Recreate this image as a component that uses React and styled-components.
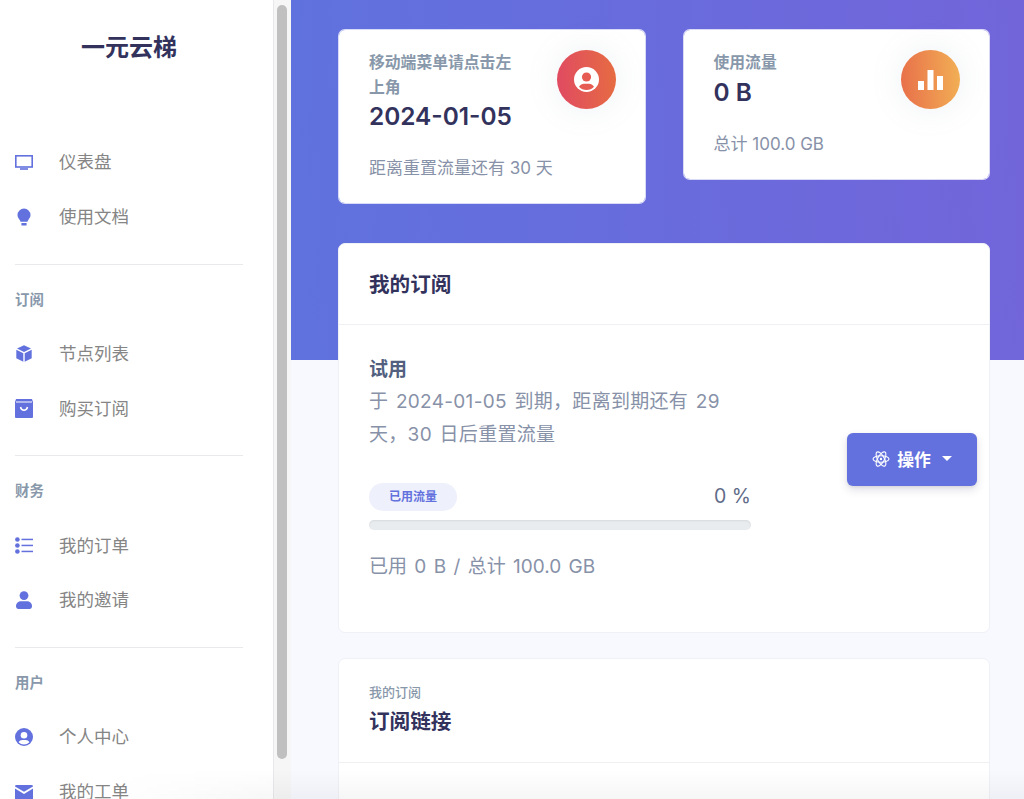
import React from 'react';
import styled, { createGlobalStyle } from 'styled-components';

const GlobalStyle = createGlobalStyle`
  html, body {
    margin: 0;
    height: 100%;
    overflow: hidden;
    background: #f8f9fe;
  }
  * {
    box-sizing: border-box;
  }
  body {
    font-family: Inter, "Noto Sans CJK SC", sans-serif;
  }
`;

const Page = styled.div`
  position: relative;
  display: flex;
  width: 1024px;
  height: 799px;
  overflow: hidden;
`;

const Sidebar = styled.aside`
  width: 273px;
  flex-shrink: 0;
  padding: 0 30px 0 15px;
  background: #fff;
  overflow: hidden;
`;

const Brand = styled.div`
  height: 135px;
  padding-top: 30px;
  text-align: center;
  font-size: 24px;
  line-height: 36px;
  font-weight: 700;
  color: #32325d;
`;

const MenuItem = styled.div`
  display: flex;
  align-items: center;
  height: 54.6px;
  font-size: 17.5px;
  color: #858585;
`;

const MenuIcon = styled.span`
  display: flex;
  justify-content: center;
  width: 18px;
  margin-right: 26px;
  color: #6271dd;

  svg {
    display: block;
  }
`;

const MenuLabel = styled.span`
  margin-top: -3px;
`;

const Divider = styled.hr`
  height: 1px;
  margin: 19.5px 0 0;
  border: 0;
  background: #e9e9ec;
`;

const SectionLabel = styled.div`
  height: 62px;
  padding-top: 24px;
  font-size: 14.4px;
  line-height: 22px;
  font-weight: 600;
  color: #8898aa;
`;

const ScrollTrack = styled.div`
  width: 18px;
  flex-shrink: 0;
  padding: 5px 3px 0 3px;
  background: #f6f6f7;
  border-left: 1px solid #e8e8ea;
`;

const ScrollThumb = styled.div`
  width: 10px;
  height: 754px;
  border-radius: 5px;
  background: #c0c0c0;
`;

const Main = styled.main`
  flex: 1;
  padding: 29px 34px 0 47px;
  background:
    linear-gradient(87deg, #5f72de, #7265da) top left / 100% 360px no-repeat,
    #f8f9fe;
`;

const StatRow = styled.div`
  display: grid;
  grid-template-columns: 1fr 1fr;
  gap: 37px;
  align-items: start;
  margin-bottom: 39px;
`;

const StatCard = styled.section`
  display: flex;
  justify-content: space-between;
  padding: 20px 29px 22px 30px;
  border: 1px solid rgba(255, 255, 255, 0.75);
  border-radius: 7px;
  background: #fff;
  background-clip: padding-box;
`;

const StatText = styled.div`
  width: 150px;
  padding-top: 1px;
`;

const StatTitle = styled.div`
  font-size: 15.8px;
  line-height: 24.5px;
  font-weight: 600;
  color: #8898aa;
`;

const StatValue = styled.div`
  font-size: 24.4px;
  line-height: 33px;
  font-weight: 600;
  color: #32325d;
  white-space: nowrap;
`;

const StatNote = styled.div`
  margin-top: 22px;
  font-size: 17px;
  line-height: 26px;
  color: #8791a8;
  white-space: nowrap;
`;

const StatIcon = styled.div`
  display: flex;
  align-items: center;
  justify-content: center;
  width: 59px;
  height: 59px;
  flex-shrink: 0;
  border-radius: 50%;
  background: linear-gradient(87deg, ${(p) => p.$from}, ${(p) => p.$to});
  box-shadow: 0 0 32px rgba(136, 152, 170, 0.15);
  color: #fff;
`;

const Panel = styled.section`
  margin-bottom: 25px;
  border: 1px solid #f0f1f6;
  border-radius: 7px;
  background: #fff;
`;

const PanelHeader = styled.header`
  padding: ${(p) => p.$padding};
  border-bottom: 1px solid #f0f0f4;
`;

const PanelTitle = styled.h3`
  margin: 0;
  font-size: 20.6px;
  line-height: 30px;
  font-weight: 600;
  color: #32325d;
`;

const PanelKicker = styled.div`
  margin-bottom: 6px;
  font-size: 13px;
  line-height: 18px;
  font-weight: 500;
  color: #8898aa;
`;

const PlanBody = styled.div`
  display: flex;
  justify-content: space-between;
  height: 307px;
  padding: 30px 12px 0 30px;
`;

const PlanInfo = styled.div`
  width: 382px;
`;

const PlanName = styled.div`
  font-size: 19px;
  line-height: 29px;
  font-weight: 600;
  color: #525f7f;
`;

const PlanExpiry = styled.div`
  width: 362px;
  margin: 1px 0 32px;
  font-size: 19px;
  line-height: 33px;
  letter-spacing: 0.3px;
  word-spacing: 2px;
  color: #8791a8;
`;

const UsageHead = styled.div`
  display: flex;
  align-items: flex-start;
  justify-content: space-between;
`;

const Badge = styled.span`
  width: 88px;
  height: 28px;
  border-radius: 14px;
  background: #eef0fc;
  font-size: 12px;
  line-height: 28px;
  font-weight: 600;
  text-align: center;
  color: #6271dd;
`;

const Percent = styled.span`
  font-size: 19.5px;
  line-height: 26px;
  color: #5f6b88;
`;

const ProgressTrack = styled.div`
  height: 10px;
  margin-top: 9px;
  border-radius: 5px;
  background: #e9ecef;
  box-shadow: inset 0 1px 2px rgba(0, 0, 0, 0.08);
`;

const ProgressBar = styled.div`
  height: 100%;
  border-radius: 5px;
  background: #6271dd;
`;

const UsageNote = styled.div`
  margin-top: 23px;
  font-size: 19px;
  line-height: 28px;
  word-spacing: 2px;
  color: #8791a8;
`;

const ActionButton = styled.button`
  display: flex;
  align-items: center;
  justify-content: center;
  width: 130px;
  height: 53px;
  margin-top: 78px;
  padding: 0 0 2px;
  border: 0;
  border-radius: 6px;
  background: #6271dd;
  box-shadow: 0 4px 8px rgba(50, 50, 93, 0.15), 0 1px 3px rgba(0, 0, 0, 0.08);
  font: inherit;
  font-size: 16.8px;
  font-weight: 600;
  color: #fff;

  svg {
    margin-right: 7px;
  }
`;

const Caret = styled.span`
  width: 0;
  height: 0;
  margin-left: 11px;
  border-top: 5px solid #fff;
  border-left: 5px solid transparent;
  border-right: 5px solid transparent;
`;

const EmptyBody = styled.div`
  height: 60px;
`;

const BottomFade = styled.div`
  position: absolute;
  left: 0;
  right: 0;
  bottom: 0;
  height: 30px;
  background: linear-gradient(rgba(0, 0, 0, 0), rgba(0, 0, 0, 0.035));
  mask-image: linear-gradient(to right, transparent 100px, black 290px);
  pointer-events: none;
`;

const MonitorIcon = () => (
  <svg width="18" height="17" viewBox="0 0 18 17" fill="none">
    <rect x="0.8" y="1.8" width="16.4" height="11.2" stroke="currentColor" strokeWidth="1.6" />
    <rect x="5" y="14.2" width="8" height="1.6" fill="currentColor" />
  </svg>
);

const BulbIcon = () => (
  <svg width="14" height="18" viewBox="0 0 14 18" fill="currentColor">
    <path d="M7 0.500a6.500 6.500 0 0 1 6.500 6.500c0 2.600-1.600 3.900-2.500 5.400-.3.5-.5 1-.6 1.400H3.600c-.1-.4-.3-.9-.6-1.400C2 10.900.5 9.600.5 7A6.500 6.500 0 0 1 7 .5z" />
    <rect x="4.400" y="15" width="5.200" height="2.600" rx="0.6" />
  </svg>
);

const BoxIcon = () => (
  <svg width="16" height="17" viewBox="0 0 16 17" fill="currentColor">
    <path d="M8 0.300l7 3.300L8 7.100 1 3.600z" />
    <path d="M0.300 4.800l7 3.500v8.400l-7-3.500z" />
    <path d="M15.700 4.800l-7 3.500v8.400l7-3.500z" />
  </svg>
);

const BagIcon = () => (
  <svg width="18" height="19" viewBox="0 0 18 19">
    <path fill="currentColor" d="M1 0h16l1 3v15a1 1 0 0 1-1 1H1a1 1 0 0 1-1-1V3z" />
    <path fill="none" stroke="#fff" strokeWidth="1" d="M1 3h16" />
    <path fill="none" stroke="#fff" strokeWidth="1.500" d="M5.500 8c.5 2.200 1.800 3.200 3.500 3.200s3-1 3.500-3.200" />
  </svg>
);

const ListIcon = () => (
  <svg width="18" height="17" viewBox="0 0 18 17" fill="currentColor">
    <circle cx="2.400" cy="2.500" r="2.300" />
    <circle cx="2.400" cy="8.500" r="2.300" />
    <circle cx="2.400" cy="14.500" r="2.300" />
    <rect x="6.500" y="1.700" width="11.500" height="1.500" />
    <rect x="6.500" y="7.700" width="11.500" height="1.500" />
    <rect x="6.500" y="13.700" width="11.500" height="1.500" />
  </svg>
);

const PersonIcon = () => (
  <svg width="16" height="18" viewBox="0 0 16 18" fill="currentColor">
    <circle cx="8" cy="4.600" r="4.400" />
    <path d="M0 15c0-3 2.500-4.800 5-4.800h6c2.500 0 5 1.800 5 4.800 0 1.700-1 3-2.500 3h-11C1 18 0 16.700 0 15z" />
  </svg>
);

const UserCircleIcon = ({ size = 18, face = '#fff' }) => (
  <svg width={size} height={size} viewBox="0 0 18 18">
    <circle cx="9" cy="9" r="9" fill="currentColor" />
    <circle cx="9" cy="7.200" r="3.300" fill={face} />
    <path fill={face} d="M3.600 14.200c.8-1.500 2.300-2.200 3.600-2.200h3.600c1.300 0 2.800.7 3.600 2.200A7.400 7.400 0 0 1 9 16.500a7.400 7.400 0 0 1-5.400-2.300z" />
  </svg>
);

const MailIcon = () => (
  <svg width="18" height="14" viewBox="0 0 18 14" fill="currentColor">
    <path d="M0 1.400A1.400 1.400 0 0 1 1.400 0h15.200A1.400 1.400 0 0 1 18 1.400L9 6.800z" />
    <path d="M0 3.600l9 5.400 9-5.400V14H0z" />
  </svg>
);

const ChartIcon = () => (
  <svg width="25" height="20" viewBox="0 0 25 20" fill="#fff">
    <rect x="0" y="11" width="6" height="9" />
    <rect x="9.500" y="0" width="6" height="20" />
    <rect x="19" y="6" width="6" height="14" />
  </svg>
);

const AtomIcon = () => (
  <svg width="18" height="18" viewBox="0 0 18 18" fill="none" stroke="currentColor" strokeWidth="1.100">
    <ellipse cx="9" cy="9" rx="8" ry="3.300" />
    <ellipse cx="9" cy="9" rx="8" ry="3.300" transform="rotate(60 9 9)" />
    <ellipse cx="9" cy="9" rx="8" ry="3.300" transform="rotate(120 9 9)" />
    <circle cx="9" cy="9" r="1.200" fill="currentColor" stroke="none" />
  </svg>
);

const sections = [
  {
    items: [
      { label: '仪表盘', icon: <MonitorIcon /> },
      { label: '使用文档', icon: <BulbIcon /> },
    ],
  },
  {
    title: '订阅',
    items: [
      { label: '节点列表', icon: <BoxIcon /> },
      { label: '购买订阅', icon: <BagIcon /> },
    ],
  },
  {
    title: '财务',
    items: [
      { label: '我的订单', icon: <ListIcon /> },
      { label: '我的邀请', icon: <PersonIcon /> },
    ],
  },
  {
    title: '用户',
    items: [
      { label: '个人中心', icon: <UserCircleIcon /> },
      { label: '我的工单', icon: <MailIcon /> },
    ],
  },
];

const expiryText = '于 2024-01-05 到期\uFF0C距离到期还有 29 天\uFF0C30 日后重置流量';

const App = () => {
  return (
    <Page>
      <GlobalStyle />
      <Sidebar>
        <Brand>一元云梯</Brand>
        {sections.map((section, i) => (
          <React.Fragment key={i}>
            {section.title && <Divider />}
            {section.title && <SectionLabel>{section.title}</SectionLabel>}
            {section.items.map((item) => (
              <MenuItem key={item.label}>
                <MenuIcon>{item.icon}</MenuIcon>
                <MenuLabel>{item.label}</MenuLabel>
              </MenuItem>
            ))}
          </React.Fragment>
        ))}
      </Sidebar>
      <ScrollTrack>
        <ScrollThumb />
      </ScrollTrack>
      <Main>
        <StatRow>
          <StatCard>
            <StatText>
              <StatTitle>移动端菜单请点击左上角</StatTitle>
              <StatValue>2024-01-05</StatValue>
              <StatNote>距离重置流量还有 30 天</StatNote>
            </StatText>
            <StatIcon $from="#e04a62" $to="#e66c42">
              <UserCircleIcon size={25} face="#e65b52" />
            </StatIcon>
          </StatCard>
          <StatCard>
            <StatText>
              <StatTitle>使用流量</StatTitle>
              <StatValue>0 B</StatValue>
              <StatNote>总计 100.0 GB</StatNote>
            </StatText>
            <StatIcon $from="#e86f4a" $to="#f2b055">
              <ChartIcon />
            </StatIcon>
          </StatCard>
        </StatRow>

        <Panel>
          <PanelHeader $padding="26px 30px 24px">
            <PanelTitle>我的订阅</PanelTitle>
          </PanelHeader>
          <PlanBody>
            <PlanInfo>
              <PlanName>试用</PlanName>
              <PlanExpiry>{expiryText}</PlanExpiry>
              <UsageHead>
                <Badge>已用流量</Badge>
                <Percent>0 %</Percent>
              </UsageHead>
              <ProgressTrack>
                <ProgressBar style={{ width: '0%' }} />
              </ProgressTrack>
              <UsageNote>已用 0 B / 总计 100.0 GB</UsageNote>
            </PlanInfo>
            <ActionButton>
              <AtomIcon />
              操作
              <Caret />
            </ActionButton>
          </PlanBody>
        </Panel>

        <Panel>
          <PanelHeader $padding="24px 30px 25px">
            <PanelKicker>我的订阅</PanelKicker>
            <PanelTitle>订阅链接</PanelTitle>
          </PanelHeader>
          <EmptyBody />
        </Panel>
      </Main>
      <BottomFade />
    </Page>
  );
};

export default App;
